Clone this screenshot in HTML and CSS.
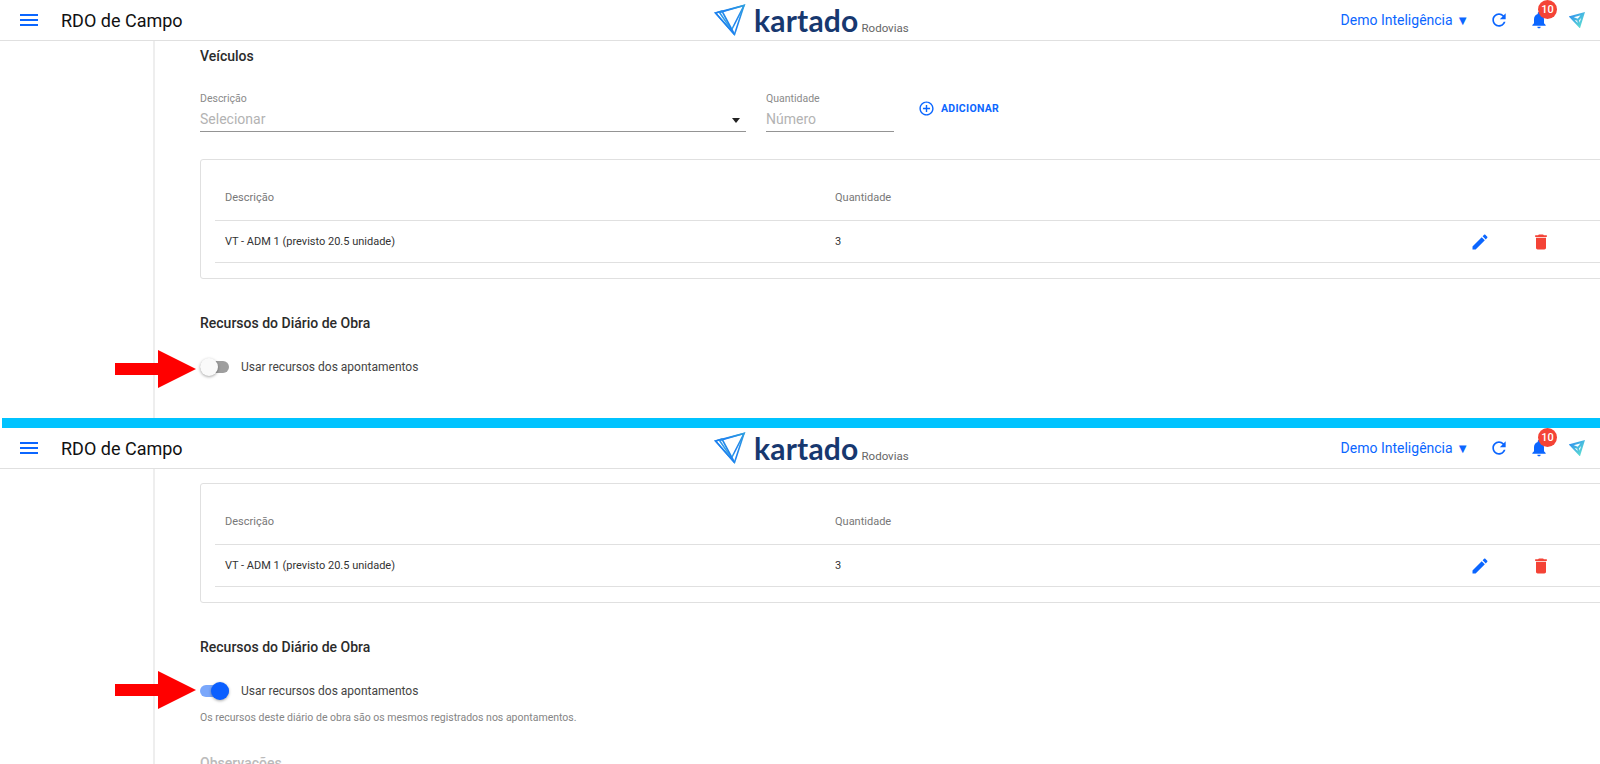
FILE: index.html
```html
<!DOCTYPE html>
<html lang="pt-BR">
<head>
    <meta charset="UTF-8">
    <meta name="viewport" content="width=device-width, initial-scale=1.0">
    <title>RDO de Campo</title>
    <link rel="stylesheet" href="styles.css">
</head>
<body>
    <svg class="icon-defs" width="0" height="0">
        <defs>
            <linearGradient id="logoGrad" x1="1" y1="0" x2="0" y2="1">
                <stop offset="0" stop-color="#2f9fe0"/>
                <stop offset="0.55" stop-color="#1e7ff0"/>
                <stop offset="1" stop-color="#5fe3d0"/>
            </linearGradient>
            <linearGradient id="planeGrad" x1="0" y1="0" x2="1" y2="1">
                <stop offset="0" stop-color="#2f8ff0"/>
                <stop offset="1" stop-color="#5fe3d0"/>
            </linearGradient>
            <symbol id="i-menu" viewBox="0 0 24 24"><path d="M3 18h18v-2H3v2zm0-5h18v-2H3v2zm0-7v2h18V6H3z"/></symbol>
            <symbol id="i-refresh" viewBox="0 0 24 24"><path d="M17.65 6.35C16.2 4.9 14.21 4 12 4c-4.42 0-7.99 3.58-7.99 8s3.57 8 7.99 8c3.73 0 6.84-2.55 7.73-6h-2.08c-.82 2.33-3.04 4-5.65 4-3.31 0-6-2.69-6-6s2.69-6 6-6c1.66 0 3.14.69 4.22 1.78L13 11h7V4l-2.35 2.35z"/></symbol>
            <symbol id="i-bell" viewBox="0 0 24 24"><path d="M12 22c1.1 0 2-.9 2-2h-4c0 1.1.89 2 2 2zm6-6v-5c0-3.07-1.64-5.64-4.5-6.32V4c0-.83-.67-1.5-1.5-1.5s-1.5.67-1.5 1.5v.68C7.63 5.36 6 7.92 6 11v5l-2 2v1h16v-1l-2-2z"/></symbol>
            <symbol id="i-edit" viewBox="0 0 24 24"><path d="M3 17.25V21h3.75L17.81 9.94l-3.75-3.75L3 17.25zM20.71 7.04c.39-.39.39-1.02 0-1.41l-2.34-2.34c-.39-.39-1.02-.39-1.41 0l-1.83 1.83 3.75 3.75 1.83-1.83z"/></symbol>
            <symbol id="i-delete" viewBox="0 0 24 24"><path d="M6 19c0 1.1.9 2 2 2h8c1.1 0 2-.9 2-2V7H6v12zM19 4h-3.5l-1-1h-5l-1 1H5v2h14V4z"/></symbol>
            <symbol id="i-add" viewBox="0 0 24 24"><path d="M13 7h-2v4H7v2h4v4h2v-4h4v-2h-4V7zm-1-5C6.48 2 2 6.48 2 12s4.48 10 10 10 10-4.48 10-10S17.52 2 12 2zm0 18c-4.41 0-8-3.59-8-8s3.59-8 8-8 8 3.59 8 8-3.59 8-8 8z"/></symbol>
            <symbol id="i-logo" viewBox="0 0 32 32">
                <path d="M1.5 9 30 1.5 20.500 30.500Z" fill="none" stroke="url(#logoGrad)" stroke-width="1.600"/>
                <path d="M5.500 8.500 30 1.500 17.500 26Z" fill="none" stroke="url(#logoGrad)" stroke-width="1.600"/>
                <path d="M1.500 9 8 7 20.500 30.500Z" fill="none" stroke="url(#logoGrad)" stroke-width="1.600"/>
            </symbol>
            <symbol id="i-plane" viewBox="0 0 16 16">
                <path d="M1.500 5 14.500 1.500 10.500 14.500Z M1.500 5 9 8 14.500 1.500 M9 8 10.500 14.500" fill="none" stroke="url(#planeGrad)" stroke-width="2"/>
            </symbol>
            <symbol id="i-arrow" viewBox="0 0 81 38"><path d="M0 13H43V0L81 19 43 38V25H0Z"/></symbol>
        </defs>
    </svg>

    <!-- primeira captura: chave desligada -->
    <section class="shot shot-off">
        <header class="topbar">
            <div class="topbar-left">
                <svg class="icon icon-menu"><use href="#i-menu"/></svg>
                <span class="page-title">RDO de Campo</span>
            </div>
            <div class="logo">
                <svg class="logo-mark"><use href="#i-logo"/></svg>
                <span class="logo-name">kartado</span>
                <span class="logo-sub">Rodovias</span>
            </div>
            <div class="topbar-right">
                <span class="company">Demo Inteligência <span class="company-caret">▼</span></span>
                <svg class="icon icon-refresh"><use href="#i-refresh"/></svg>
                <span class="bell">
                    <svg class="icon icon-bell"><use href="#i-bell"/></svg>
                    <span class="badge">10</span>
                </span>
                <svg class="icon-plane"><use href="#i-plane"/></svg>
            </div>
        </header>
        <div class="shot-body">
            <div class="sidebar"></div>
            <main class="content">
                <h2 class="section-title title-vehicles">Veículos</h2>
                <div class="vehicle-form">
                    <div class="field field-desc">
                        <label>Descrição</label>
                        <div class="field-input"><span>Selecionar</span><i class="caret"></i></div>
                    </div>
                    <div class="field field-qty">
                        <label>Quantidade</label>
                        <div class="field-input"><span>Número</span></div>
                    </div>
                    <button class="add-btn" type="button">
                        <svg class="icon icon-add"><use href="#i-add"/></svg>
                        ADICIONAR
                    </button>
                </div>
                <div class="table-card">
                    <div class="table-row table-head">
                        <span class="col-desc">Descrição</span>
                        <span class="col-qty">Quantidade</span>
                    </div>
                    <div class="table-row table-item">
                        <span class="col-desc">VT - ADM 1 (previsto 20.5 unidade)</span>
                        <span class="col-qty">3</span>
                        <svg class="icon icon-edit"><use href="#i-edit"/></svg>
                        <svg class="icon icon-delete"><use href="#i-delete"/></svg>
                    </div>
                </div>
                <h2 class="section-title title-resources">Recursos do Diário de Obra</h2>
                <div class="switch-row">
                    <span class="switch"><span class="switch-thumb"></span></span>
                    <span class="switch-label">Usar recursos dos apontamentos</span>
                </div>
            </main>
        </div>
        <svg class="red-arrow"><use href="#i-arrow"/></svg>
    </section>

    <div class="divider"></div>

    <!-- segunda captura: chave ligada -->
    <section class="shot shot-on">
        <header class="topbar">
            <div class="topbar-left">
                <svg class="icon icon-menu"><use href="#i-menu"/></svg>
                <span class="page-title">RDO de Campo</span>
            </div>
            <div class="logo">
                <svg class="logo-mark"><use href="#i-logo"/></svg>
                <span class="logo-name">kartado</span>
                <span class="logo-sub">Rodovias</span>
            </div>
            <div class="topbar-right">
                <span class="company">Demo Inteligência <span class="company-caret">▼</span></span>
                <svg class="icon icon-refresh"><use href="#i-refresh"/></svg>
                <span class="bell">
                    <svg class="icon icon-bell"><use href="#i-bell"/></svg>
                    <span class="badge">10</span>
                </span>
                <svg class="icon-plane"><use href="#i-plane"/></svg>
            </div>
        </header>
        <div class="shot-body">
            <div class="sidebar"></div>
            <main class="content">
                <div class="table-card">
                    <div class="table-row table-head">
                        <span class="col-desc">Descrição</span>
                        <span class="col-qty">Quantidade</span>
                    </div>
                    <div class="table-row table-item">
                        <span class="col-desc">VT - ADM 1 (previsto 20.5 unidade)</span>
                        <span class="col-qty">3</span>
                        <svg class="icon icon-edit"><use href="#i-edit"/></svg>
                        <svg class="icon icon-delete"><use href="#i-delete"/></svg>
                    </div>
                </div>
                <h2 class="section-title title-resources">Recursos do Diário de Obra</h2>
                <div class="switch-row">
                    <span class="switch on"><span class="switch-thumb"></span></span>
                    <span class="switch-label">Usar recursos dos apontamentos</span>
                </div>
                <p class="switch-help">Os recursos deste diário de obra são os mesmos registrados nos apontamentos.</p>
                <h2 class="section-title title-notes">Observações</h2>
            </main>
        </div>
        <svg class="red-arrow"><use href="#i-arrow"/></svg>
    </section>
</body>
</html>
```

FILE: styles.css
```css
* {
    margin: 0;
    padding: 0;
    box-sizing: border-box;
}

html, body {
    overflow: hidden;
}

body {
    width: 1600px;
    height: 764px;
    font-family: Roboto, sans-serif;
    background: white;
    color: #333;
}

.icon-defs {
    position: absolute;
}

.icon {
    fill: #0b66ff;
    flex: none;
}

.shot {
    position: relative;
    overflow: hidden;
    display: flex;
    flex-direction: column;
}

.shot-off {
    height: 418px;
}

.shot-on {
    height: 336px;
}

.divider {
    height: 10px;
    margin-left: 2px;
    background: #00c3ff;
}

/* topo */
.topbar {
    height: 41px;
    flex: none;
    display: flex;
    align-items: center;
    justify-content: space-between;
    position: relative;
    border-bottom: 1px solid #e0e0e0;
    background: white;
}

.topbar-left {
    display: flex;
    align-items: center;
    padding-left: 17px;
}

.icon-menu {
    width: 24px;
    height: 24px;
}

.page-title {
    margin-left: 20px;
    font-size: 18px;
    color: #111;
}

.logo {
    position: absolute;
    left: 714px;
    top: 3px;
    display: flex;
    align-items: baseline;
}

.logo-mark {
    width: 32px;
    height: 32px;
    align-self: center;
}

.logo-name {
    margin-left: 8px;
    font-family: Lato, sans-serif;
    font-size: 30px;
    line-height: 34px;
    font-weight: 700;
    letter-spacing: 0.2px;
    color: #17386f;
}

.logo-sub {
    margin-left: 3px;
    font-size: 11.500px;
    color: #666;
}

.topbar-right {
    display: flex;
    align-items: center;
    padding-right: 15px;
}

.company {
    font-size: 14px;
    color: #0b66ff;
}

.company-caret {
    font-size: 13px;
}

.icon-refresh {
    width: 20px;
    height: 20px;
    margin-left: 20px;
}

.bell {
    position: relative;
    display: flex;
    margin-left: 20px;
}

.icon-bell {
    width: 20px;
    height: 20px;
}

.badge {
    position: absolute;
    left: 9px;
    top: -10px;
    width: 19px;
    height: 19px;
    border-radius: 50%;
    background: #f44336;
    color: white;
    font-size: 11px;
    font-weight: 500;
    line-height: 19px;
    text-align: center;
}

.icon-plane {
    width: 16px;
    height: 16px;
    margin-left: 20px;
}

/* corpo */
.shot-body {
    flex: 1;
    display: flex;
    min-height: 0;
}

.sidebar {
    width: 155px;
    flex: none;
    border-right: 2px solid #eeeeee;
}

.content {
    flex: 1;
    min-width: 0;
    padding-left: 45px;
}

.section-title {
    font-size: 14px;
    font-weight: 500;
    line-height: 18px;
    color: #2b2b2b;
}

.title-vehicles {
    margin-top: 6px;
}

.vehicle-form {
    display: flex;
    align-items: flex-start;
    margin-top: 27px;
}

.field label {
    display: block;
    font-size: 10.500px;
    line-height: 14px;
    color: #8a8a8a;
}

.field-input {
    position: relative;
    height: 26px;
    display: flex;
    align-items: center;
    border-bottom: 1px solid #949494;
    font-size: 14px;
    color: #b3b3b3;
}

.field-desc {
    width: 546px;
}

.field-qty {
    width: 128px;
    margin-left: 20px;
}

.caret {
    position: absolute;
    right: 6px;
    top: 12px;
    border-left: 4.500px solid transparent;
    border-right: 4.500px solid transparent;
    border-top: 5px solid #222;
}

.add-btn {
    display: flex;
    align-items: center;
    gap: 6px;
    margin: 8px 0 0 24px;
    border: none;
    background: none;
    font-family: inherit;
    font-size: 10.500px;
    font-weight: 700;
    letter-spacing: 0.3px;
    color: #0b66ff;
}

.icon-add {
    width: 17px;
    height: 17px;
}

/* tabela */
.table-card {
    height: 120px;
    margin-right: -20px;
    padding: 14px 14px 0;
    border: 1px solid #e0e0e0;
    border-radius: 3px;
    font-size: 11px;
}

.shot-off .table-card {
    margin-top: 27px;
}

.shot-on .table-card {
    margin-top: 14px;
}

.table-row {
    position: relative;
    display: flex;
    align-items: center;
    padding-left: 10px;
    border-bottom: 1px solid #e0e0e0;
}

.table-head {
    height: 47px;
    color: #777;
}

.table-item {
    height: 42px;
    color: #333;
}

.col-desc {
    width: 610px;
}

.icon-edit,
.icon-delete {
    position: absolute;
    top: 11px;
    width: 20px;
    height: 20px;
}

.icon-edit {
    left: 1255px;
}

.icon-delete {
    left: 1316px;
    fill: #f44336;
}

/* recursos */
.title-resources {
    margin-top: 35px;
}

.switch-row {
    display: flex;
    align-items: center;
    margin-top: 26px;
    height: 18px;
}

.switch {
    position: relative;
    width: 29px;
    height: 12px;
    border-radius: 6px;
    background: #9e9e9e;
}

.switch-thumb {
    position: absolute;
    top: -3px;
    left: 0;
    width: 18px;
    height: 18px;
    border-radius: 50%;
    background: #fafafa;
    box-shadow: 0 1px 3px rgba(0, 0, 0, 0.35);
}

.switch.on {
    background: #7aa7fb;
}

.switch.on .switch-thumb {
    left: 11px;
    background: #0b5fff;
}

.switch-label {
    margin-left: 12px;
    font-size: 12px;
    color: #444;
}

.switch-help {
    margin-top: 11px;
    font-size: 10.500px;
    line-height: 14px;
    color: #858585;
}

.title-notes {
    margin-top: 29px;
    color: #bbb;
}

.red-arrow {
    position: absolute;
    left: 115px;
    top: 350px;
    width: 81px;
    height: 38px;
    fill: #ff0000;
}

.shot-on .red-arrow {
    top: 243px;
}
```
